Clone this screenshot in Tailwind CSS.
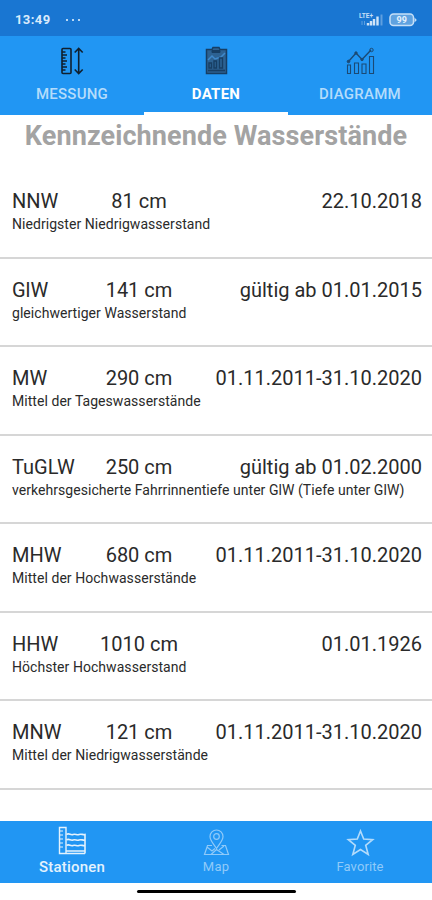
<!DOCTYPE html>
<html lang="de">
<head>
  <meta charset="UTF-8">
  <meta name="viewport" content="width=device-width, initial-scale=1.0">
  <title>Kennzeichnende Wasserstände</title>
  <script src="https://cdn.jsdelivr.net/npm/@tailwindcss/browser@4"></script>
</head>
<body class="bg-white font-['Roboto',sans-serif] text-[#2a2a2a]">
  <div class="flex flex-col w-[432px] h-[900px] overflow-hidden">
    <!-- Status bar -->
    <div class="h-9 shrink-0 bg-[#1976d2] text-[#d9ebfc] flex items-center px-[15px] pt-[3px]">
      <span class="text-[13px] font-bold tracking-[0.4px]">13:49</span>
      <span class="flex gap-[4px] ml-[15px]">
        <i class="size-[2px] bg-[#b9d8f5]"></i><i class="size-[2px] bg-[#b9d8f5]"></i><i class="size-[2px] bg-[#b9d8f5]"></i>
      </span>
      <svg class="ml-auto" width="25" height="15" viewBox="0 0 25 15">
        <text x="0" y="6" font-size="6.500" font-weight="700" fill="#c5dff7" textLength="14">LTE+</text>
        <path d="M3 9v4M5.500 9v4" stroke="#5f9fdf" stroke-width="1"/>
        <path d="M9 11v2.500M12 9v4.500M15 7v6.500M18.500 4.500v9" stroke="#cfe4f8" stroke-width="2.400"/>
        <path d="M22.500 2.500v11" stroke="#5f9fdf" stroke-width="2"/>
      </svg>
      <svg class="ml-[5px]" width="28" height="14" viewBox="0 0 28 14">
        <rect x="1" y="1" width="23.500" height="11.500" rx="3.500" fill="#5fa2e0" stroke="#c5dff7" stroke-width="1.500"/>
        <path d="M25.500 4.500v5l2.300-2.500z" fill="#c5dff7"/>
        <text x="12.700" y="10.200" font-size="9" font-weight="700" fill="#e6f2fd" text-anchor="middle">99</text>
      </svg>
    </div>

    <!-- Tabs -->
    <div class="h-[79px] shrink-0 bg-[#2196f3] grid grid-cols-3 text-[15px] tracking-[0.25px] font-medium text-[#b4dcfb]">
      <div class="flex flex-col items-center pt-[10px]">
        <svg width="30" height="30" viewBox="0 0 30 30" fill="none" stroke="#10202f">
          <rect x="5" y="2.500" width="9" height="25" rx="1" stroke-width="1.600"/>
          <path d="M5 6h3.500M5 9h5M5 12h3.500M5 15h5M5 18h3.500M5 21h5M5 24h3.500" stroke-width="1.400"/>
          <path d="M21.700 3v24M17.700 6.500l4-4 4 4M17.700 23.500l4 4 4-4" stroke-width="1.600"/>
        </svg>
        <span class="mt-[8px] leading-5">MESSUNG</span>
      </div>
      <div class="flex flex-col items-center pt-[10px] border-b-[3px] border-white text-white">
        <svg width="30" height="30" viewBox="0 0 30 30" fill="none" stroke="#173e63">
          <path d="M5.500 3.500h5.500l1-2h6l1 2h6.500v24h-20z" fill="#2d6292" stroke-width="1.500"/>
          <path d="M11 4.500h8v2h-8z" fill="#173e63" stroke-width="1"/>
          <path d="M7 14l4-4 3 3 6-2 4-4" stroke="#3f89ca" stroke-width="1.500"/>
          <path d="M8 17h2.500v5H8zM13 15h2.500v7H13zM18.500 12h3v10h-3z" stroke-width="1.400"/>
          <path d="M7 24.500h17" stroke-width="1.700"/>
        </svg>
        <span class="mt-[8px] leading-5 font-bold">DATEN</span>
      </div>
      <div class="flex flex-col items-center pt-[10px]">
        <svg width="30" height="30" viewBox="0 0 30 30" fill="none" stroke="#1b4a75">
          <path d="M2.500 19h3v8.500h-3zM9.500 17h4v10.500h-4zM17 18h4v9.500h-4zM24.500 10.500h4v17h-4z" stroke-width="1.100"/>
          <path d="M3.500 15.500l7.500-8.500 6 6.500 9-9.500" stroke-width="1.400"/>
          <circle cx="3.500" cy="15.500" r="1.300" fill="#1b4a75"/>
          <circle cx="11" cy="7" r="1.200" fill="#1b4a75"/>
          <circle cx="17" cy="13.500" r="1.200" fill="#1b4a75"/>
          <circle cx="26.500" cy="4" r="1.700"/>
        </svg>
        <span class="mt-[8px] leading-5">DIAGRAMM</span>
      </div>
    </div>

    <!-- Characteristic water levels -->
    <main class="grow">
      <h1 class="h-[55px] pt-[5px] text-center text-[27px] tracking-[0.1px] leading-8 font-bold text-[#a3a3a3] whitespace-nowrap">Kennzeichnende Wasserstände</h1>
      <section class="h-[88.5px] border-b-2 border-[#d6d6d6] pl-3 pr-[10px] pt-[19px]">
        <div class="grid grid-cols-[75px_104px_1fr] text-xl leading-6 whitespace-nowrap">
          <span>NNW</span><span class="text-center">81 cm</span><span class="text-right">22.10.2018</span>
        </div>
        <p class="text-sm tracking-[0.05px] leading-[22px] whitespace-nowrap">Niedrigster Niedrigwasserstand</p>
      </section>
      <section class="h-[88.5px] border-b-2 border-[#d6d6d6] pl-3 pr-[10px] pt-[19px]">
        <div class="grid grid-cols-[75px_104px_1fr] text-xl leading-6 whitespace-nowrap">
          <span>GlW</span><span class="text-center">141 cm</span><span class="text-right">gültig ab 01.01.2015</span>
        </div>
        <p class="text-sm tracking-[0.05px] leading-[22px] whitespace-nowrap">gleichwertiger Wasserstand</p>
      </section>
      <section class="h-[88.5px] border-b-2 border-[#d6d6d6] pl-3 pr-[10px] pt-[19px]">
        <div class="grid grid-cols-[75px_104px_1fr] text-xl leading-6 whitespace-nowrap">
          <span>MW</span><span class="text-center">290 cm</span><span class="text-right">01.11.2011-31.10.2020</span>
        </div>
        <p class="text-sm tracking-[0.05px] leading-[22px] whitespace-nowrap">Mittel der Tageswasserstände</p>
      </section>
      <section class="h-[88.5px] border-b-2 border-[#d6d6d6] pl-3 pr-[10px] pt-[19px]">
        <div class="grid grid-cols-[75px_104px_1fr] text-xl leading-6 whitespace-nowrap">
          <span>TuGLW</span><span class="text-center">250 cm</span><span class="text-right">gültig ab 01.02.2000</span>
        </div>
        <p class="text-sm tracking-[0.05px] leading-[22px] whitespace-nowrap">verkehrsgesicherte Fahrrinnentiefe unter GlW (Tiefe unter GlW)</p>
      </section>
      <section class="h-[88.5px] border-b-2 border-[#d6d6d6] pl-3 pr-[10px] pt-[19px]">
        <div class="grid grid-cols-[75px_104px_1fr] text-xl leading-6 whitespace-nowrap">
          <span>MHW</span><span class="text-center">680 cm</span><span class="text-right">01.11.2011-31.10.2020</span>
        </div>
        <p class="text-sm tracking-[0.05px] leading-[22px] whitespace-nowrap">Mittel der Hochwasserstände</p>
      </section>
      <section class="h-[88.5px] border-b-2 border-[#d6d6d6] pl-3 pr-[10px] pt-[19px]">
        <div class="grid grid-cols-[75px_104px_1fr] text-xl leading-6 whitespace-nowrap">
          <span>HHW</span><span class="text-center">1010 cm</span><span class="text-right">01.01.1926</span>
        </div>
        <p class="text-sm tracking-[0.05px] leading-[22px] whitespace-nowrap">Höchster Hochwasserstand</p>
      </section>
      <section class="h-[88.5px] border-b-2 border-[#d6d6d6] pl-3 pr-[10px] pt-[19px]">
        <div class="grid grid-cols-[75px_104px_1fr] text-xl leading-6 whitespace-nowrap">
          <span>MNW</span><span class="text-center">121 cm</span><span class="text-right">01.11.2011-31.10.2020</span>
        </div>
        <p class="text-sm tracking-[0.05px] leading-[22px] whitespace-nowrap">Mittel der Niedrigwasserstände</p>
      </section>
    </main>

    <!-- Bottom navigation -->
    <nav class="h-[62px] shrink-0 bg-[#2196f3] grid grid-cols-3 text-[#90caf9]">
      <div class="flex flex-col items-center pt-[5px] text-[#e3f2fd]">
        <svg width="30" height="30" viewBox="0 0 30 30" fill="none" stroke="currentColor" stroke-width="1.400">
          <path d="M2.500 1.500H9v26H2.500zM9 25h19M9 27.500h19"/>
          <path d="M3 5h3M3 9h3M3 13h3M3 17h3M3 21h3" stroke-width="1.200"/>
          <path d="M9.500 8.500c2.500-2 4 1 6.500 0s4 1 6 0 4 .5 6 0v19M9.500 14c2.500-2 4 1 6.500 0s4 1 6 0 4 .5 6 0M9.500 19.500c2.500-2 4 1 6.500 0s4 1 6 0 4 .5 6 0" stroke-width="1.600"/>
        </svg>
        <span class="text-[15px] tracking-[0.2px] leading-[22px] font-medium">Stationen</span>
      </div>
      <div class="flex flex-col items-center pt-[7px]">
        <svg width="28" height="30" viewBox="0 0 28 30" fill="none" stroke="currentColor" stroke-width="1.200">
          <path d="M14.500 20.500C11 15 8 12.500 8 8.500a6.500 6.500 0 0 1 13 0c0 4-3 6.500-6.500 12z"/>
          <circle cx="14.500" cy="8.500" r="2.800"/>
          <path d="M10 17.500H5.500L2.500 26.500h24l-3-9h-4M5 19l5 4 3-2.500M9 26.500l5.500-5 7.500 5M17 22l5-4"/>
        </svg>
        <span class="text-[13px] tracking-[0.2px] leading-[18px]">Map</span>
      </div>
      <div class="flex flex-col items-center pt-[7px]">
        <svg width="30" height="30" viewBox="0 0 30 30" fill="none" stroke="#b3dbfb" stroke-width="1.600">
          <path d="M15.500 3l3.200 8 9 .6-7 5.700 2.500 9.200-7.700-5-7.700 5 2.500-9.200-7-5.700 9-.6z"/>
        </svg>
        <span class="text-[13px] tracking-[0.1px] leading-[18px]">Favorite</span>
      </div>
    </nav>
    <div class="h-[17px] shrink-0 flex justify-center pt-[7px]">
      <div class="w-[159px] h-[3px] bg-black rounded-full"></div>
    </div>
  </div>
</body>
</html>
